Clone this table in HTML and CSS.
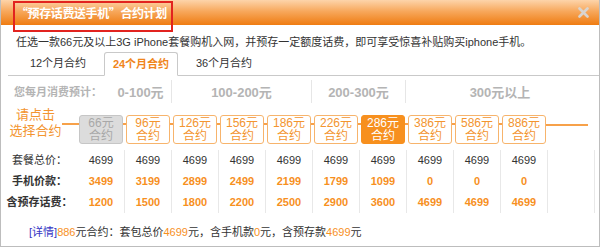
FILE: index.html
```html
<!DOCTYPE html>
<html lang="zh-CN">
<head>
<meta charset="utf-8">
<title>预存话费送手机 合约计划</title>
<link rel="stylesheet" href="styles.css">
</head>
<body>
<div class="dialog">
  <div class="header">
    <span class="title">“预存话费送手机”合约计划</span>
    <span class="close"><svg width="11" height="11" viewBox="0 0 11 11"><path d="M1.5 1.5 L9.5 9.5 M9.5 1.5 L1.5 9.5" stroke="#d9d4cf" stroke-width="2.6" stroke-linecap="round"/></svg></span>
  </div>
  <div class="redbox"></div>
  <p class="intro">任选一款66元及以上3G iPhone套餐购机入网，并预存一定额度话费，即可享受惊喜补贴购买iphone手机。</p>
  <div class="tabs">
    <div class="tab">12个月合约</div>
    <div class="tab active">24个月合约</div>
    <div class="tab">36个月合约</div>
  </div>
  <div class="spend">
    <div class="spend-label">您每月消费预计：</div>
    <div class="range r1">0-100元</div>
    <div class="range r2">100-200元</div>
    <div class="range r3">200-300元</div>
    <div class="range r4">300元以上</div>
  </div>
  <div class="pick">
    <div class="pick-label">请点击<br>选择合约</div>
    <span class="lead"></span>
    <div class="plan disabled">66元<br>合约</div><span class="tick"></span>
    <div class="plan">96元<br>合约</div><span class="tick"></span>
    <div class="plan">126元<br>合约</div><span class="tick"></span>
    <div class="plan">156元<br>合约</div><span class="tick"></span>
    <div class="plan">186元<br>合约</div><span class="tick"></span>
    <div class="plan">226元<br>合约</div><span class="tick"></span>
    <div class="plan selected">286元<br>合约</div><span class="tick"></span>
    <div class="plan">386元<br>合约</div><span class="tick"></span>
    <div class="plan">586元<br>合约</div><span class="tick"></span>
    <div class="plan">886元<br>合约</div>
    <span class="tail"></span>
  </div>
  <div class="table">
    <div class="row">
      <div class="label">套餐总价：</div>
      <div class="cell">4699</div><div class="cell">4699</div><div class="cell">4699</div><div class="cell">4699</div><div class="cell">4699</div>
      <div class="cell">4699</div><div class="cell">4699</div><div class="cell">4699</div><div class="cell">4699</div><div class="cell">4699</div>
      <div class="cell"></div>
    </div>
    <div class="row hl">
      <div class="label strong">手机价款：</div>
      <div class="cell">3499</div><div class="cell">3199</div><div class="cell">2899</div><div class="cell">2499</div><div class="cell">2199</div>
      <div class="cell">1799</div><div class="cell">1099</div><div class="cell">0</div><div class="cell">0</div><div class="cell">0</div>
      <div class="cell"></div>
    </div>
    <div class="row hl">
      <div class="label strong">含预存话费：</div>
      <div class="cell">1200</div><div class="cell">1500</div><div class="cell">1800</div><div class="cell">2200</div><div class="cell">2500</div>
      <div class="cell">2900</div><div class="cell">3600</div><div class="cell">4699</div><div class="cell">4699</div><div class="cell">4699</div>
      <div class="cell"></div>
    </div>
  </div>
  <p class="detail"><a class="more" href="#">[详情]</a><span class="num">886</span>元合约：套包总价<span class="num">4699</span>元，含手机款<span class="num">0</span>元，含预存款<span class="num">4699</span>元</p>
</div>
</body>
</html>
```
FILE: styles.css
```css
* { box-sizing: border-box; }
html, body { margin: 0; padding: 0; background: #fff; }
body {
  font-family: "Liberation Sans", "Noto Sans CJK SC", sans-serif;
  font-size: 11px;
  color: #333;
}
.dialog {
  position: relative;
  width: 600px;
  height: 247px;
  border: 1px solid #bdbdbd;
  border-top: none;
  background: #fff;
}
.header {
  height: 25px;
  background: linear-gradient(#fdd4aa, #f7a85c 45%, #ef7c12);
  display: flex;
  align-items: center;
  padding-left: 15px;
  position: relative;
}
.title {
  color: #fff;
  font-family: "Noto Sans CJK SC", sans-serif;
  font-weight: bold;
  font-size: 12px;
  line-height: 14px;
  letter-spacing: -0.4px;
}
.close {
  position: absolute;
  right: 10px;
  top: 7px;
  display: flex;
}
.redbox {
  position: absolute;
  left: 12px;
  top: 1px;
  width: 160px;
  height: 31px;
  border: 2px solid #e2231f;
}
.intro {
  margin: 10px 0 3px 15px;
  line-height: 14px;
  height: 14px;
}
.tabs {
  display: flex;
  height: 24px;
  margin-left: 7px;
  padding-left: 13px;
  border-bottom: 1px solid #c9c9c9;
  gap: 9px;
}
.tab {
  width: 74px;
  height: 24px;
  line-height: 22px;
  text-align: center;
  color: #333;
}
.tab.active {
  color: #f0851b;
  font-weight: bold;
  background: #fff;
  border: 1px solid #c9c9c9;
  border-bottom: 1px solid #fff;
  border-radius: 3px 3px 0 0;
}
.spend {
  display: flex;
  align-items: center;
  height: 24px;
  margin-top: 3px;
  color: #b4b4b4;
  font-weight: bold;
}
.spend-label {
  width: 109px;
  padding-left: 13px;
}
.range {
  height: 23px;
  display: flex;
  align-items: center;
  justify-content: center;
  font-size: 13px;
  border-right: 1px solid #e6e6e6;
}
.r1 { width: 62px; }
.r2 { width: 140px; }
.r3 { width: 94px; }
.r4 { width: 188px; border-right: none; }
.pick {
  display: flex;
  align-items: flex-start;
  height: 40px;
  margin-top: 2px;
}
.pick-label {
  width: 53px;
  margin-left: 8px;
  text-align: center;
  white-space: nowrap;
  color: #f39530;
  font-size: 13px;
  line-height: 16px;
  padding-top: 2px;
}
.lead {
  width: 17px;
  height: 2px;
  margin-top: 18px;
  background: #f7a14a;
}
.plan {
  width: 44px;
  height: 29px;
  margin-top: 10px;
  border: 1px solid #f7b46c;
  border-radius: 3px;
  background: #fff;
  color: #f39530;
  text-align: center;
  font-size: 12px;
  line-height: 13px;
  padding-top: 1px;
}
.plan.disabled {
  background: #dcdcdc;
  border-color: #c6c6c6;
  color: #a8a8a8;
}
.plan.selected {
  background: #f7901e;
  border-color: #f7901e;
  color: #fff;
}
.tick {
  width: 3px;
  height: 2px;
  margin-top: 18px;
  background: #f7a14a;
}
.tail {
  width: 42px;
  height: 2px;
  margin-top: 19px;
  background: #f7a14a;
}
.table {
  margin-top: 5px;
}
.row {
  display: flex;
  height: 21px;
}
.label {
  width: 77px;
  text-align: center;
  line-height: 21px;
  color: #333;
}
.label.strong { font-weight: bold; }
.cell {
  width: 47px;
  text-align: center;
  line-height: 21px;
  border-right: 1px solid #e8e8e8;
  color: #333;
}
.row.hl .cell {
  color: #f7901e;
  font-weight: bold;
}
.detail {
  margin: 12px 0 0 28px;
  line-height: 14px;
}
.more { color: #3434c4; text-decoration: none; }
.num { color: #f7901e; }
```
